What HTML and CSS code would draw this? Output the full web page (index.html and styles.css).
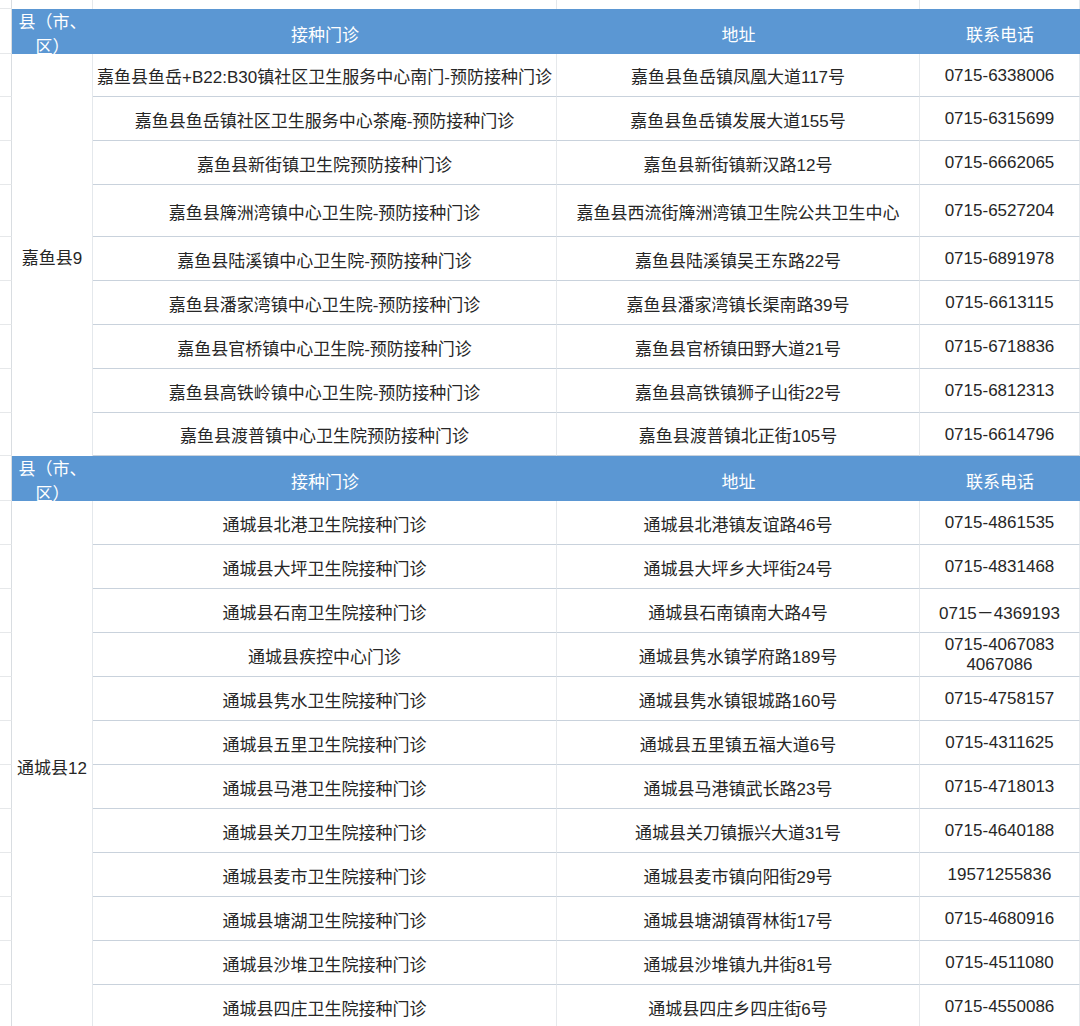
FILE: index.html
```html
<!DOCTYPE html>
<html lang="zh-CN">
<head>
<meta charset="utf-8">
<title>接种门诊</title>
<link rel="stylesheet" href="styles.css">
</head>
<body>
<div class="sheet">
  <div class="strip">
    <div class="mg"></div><div class="sc"></div><div class="sc"></div><div class="sc"></div><div class="sc"></div>
  </div>

  <section class="block s1">
    <div class="mg"></div>
    <div class="th th-county">县（市、区）</div>
    <div class="th">接种门诊</div>
    <div class="th">地址</div>
    <div class="th">联系电话</div>

    <div class="mg"></div>
    <div class="county c9">嘉鱼县9</div>
    <div class="td">嘉鱼县鱼岳+B22:B30镇社区卫生服务中心南门-预防接种门诊</div>
    <div class="td">嘉鱼县鱼岳镇凤凰大道117号</div>
    <div class="td">0715-6338006</div>

    <div class="mg"></div>
    <div class="td">嘉鱼县鱼岳镇社区卫生服务中心茶庵-预防接种门诊</div>
    <div class="td">嘉鱼县鱼岳镇发展大道155号</div>
    <div class="td">0715-6315699</div>

    <div class="mg"></div>
    <div class="td">嘉鱼县新街镇卫生院预防接种门诊</div>
    <div class="td">嘉鱼县新街镇新汉路12号</div>
    <div class="td">0715-6662065</div>

    <div class="mg"></div>
    <div class="td">嘉鱼县簰洲湾镇中心卫生院-预防接种门诊</div>
    <div class="td">嘉鱼县西流街簰洲湾镇卫生院公共卫生中心</div>
    <div class="td">0715-6527204</div>

    <div class="mg"></div>
    <div class="td">嘉鱼县陆溪镇中心卫生院-预防接种门诊</div>
    <div class="td">嘉鱼县陆溪镇吴王东路22号</div>
    <div class="td">0715-6891978</div>

    <div class="mg"></div>
    <div class="td">嘉鱼县潘家湾镇中心卫生院-预防接种门诊</div>
    <div class="td">嘉鱼县潘家湾镇长渠南路39号</div>
    <div class="td">0715-6613115</div>

    <div class="mg"></div>
    <div class="td">嘉鱼县官桥镇中心卫生院-预防接种门诊</div>
    <div class="td">嘉鱼县官桥镇田野大道21号</div>
    <div class="td">0715-6718836</div>

    <div class="mg"></div>
    <div class="td">嘉鱼县高铁岭镇中心卫生院-预防接种门诊</div>
    <div class="td">嘉鱼县高铁镇狮子山街22号</div>
    <div class="td">0715-6812313</div>

    <div class="mg"></div>
    <div class="td">嘉鱼县渡普镇中心卫生院预防接种门诊</div>
    <div class="td">嘉鱼县渡普镇北正街105号</div>
    <div class="td">0715-6614796</div>
  </section>

  <section class="block s2">
    <div class="mg"></div>
    <div class="th th-county">县（市、区）</div>
    <div class="th">接种门诊</div>
    <div class="th">地址</div>
    <div class="th">联系电话</div>

    <div class="mg"></div>
    <div class="county c12">通城县12</div>
    <div class="td">通城县北港卫生院接种门诊</div>
    <div class="td">通城县北港镇友谊路46号</div>
    <div class="td">0715-4861535</div>

    <div class="mg"></div>
    <div class="td">通城县大坪卫生院接种门诊</div>
    <div class="td">通城县大坪乡大坪街24号</div>
    <div class="td">0715-4831468</div>

    <div class="mg"></div>
    <div class="td">通城县石南卫生院接种门诊</div>
    <div class="td">通城县石南镇南大路4号</div>
    <div class="td">0715－4369193</div>

    <div class="mg"></div>
    <div class="td">通城县疾控中心门诊</div>
    <div class="td">通城县隽水镇学府路189号</div>
    <div class="td two">0715-4067083<br>4067086</div>

    <div class="mg"></div>
    <div class="td">通城县隽水卫生院接种门诊</div>
    <div class="td">通城县隽水镇银城路160号</div>
    <div class="td">0715-4758157</div>

    <div class="mg"></div>
    <div class="td">通城县五里卫生院接种门诊</div>
    <div class="td">通城县五里镇五福大道6号</div>
    <div class="td">0715-4311625</div>

    <div class="mg"></div>
    <div class="td">通城县马港卫生院接种门诊</div>
    <div class="td">通城县马港镇武长路23号</div>
    <div class="td">0715-4718013</div>

    <div class="mg"></div>
    <div class="td">通城县关刀卫生院接种门诊</div>
    <div class="td">通城县关刀镇振兴大道31号</div>
    <div class="td">0715-4640188</div>

    <div class="mg"></div>
    <div class="td">通城县麦市卫生院接种门诊</div>
    <div class="td">通城县麦市镇向阳街29号</div>
    <div class="td">19571255836</div>

    <div class="mg"></div>
    <div class="td">通城县塘湖卫生院接种门诊</div>
    <div class="td">通城县塘湖镇胥林街17号</div>
    <div class="td">0715-4680916</div>

    <div class="mg"></div>
    <div class="td">通城县沙堆卫生院接种门诊</div>
    <div class="td">通城县沙堆镇九井街81号</div>
    <div class="td">0715-4511080</div>

    <div class="mg"></div>
    <div class="td">通城县四庄卫生院接种门诊</div>
    <div class="td">通城县四庄乡四庄街6号</div>
    <div class="td">0715-4550086</div>
  </section>
</div>
</body>
</html>
```

FILE: styles.css
```css
html, body {
  margin: 0;
  padding: 0;
  background: #ffffff;
}
body {
  width: 1080px;
  height: 1026px;
  overflow: hidden;
  font-family: "Liberation Sans", "Noto Sans CJK SC", sans-serif;
  font-size: 17px;
  color: #262626;
}
.sheet {
  width: 1080px;
}
.strip,
.block {
  display: grid;
  grid-template-columns: 12px 81px 464px 363px 160px;
}
.strip {
  height: 9px;
}
.strip .mg {
  border-right: 1px solid #d9dde1;
}
.strip .sc {
  border-right: 1px solid #e4e8ec;
}
.s1 {
  grid-template-rows: 45px 43px 44px 44px 52px 44px 44px 44px 44px 43px;
}
.s2 {
  grid-template-rows: 45px repeat(12, 44px);
}
.mg {
  box-sizing: border-box;
  border-bottom: 1px solid #e6e8ea;
  border-right: 1px solid #d9dde1;
  background: #ffffff;
}
.th {
  background: #5b97d3;
  color: #ffffff;
  display: flex;
  align-items: center;
  justify-content: center;
  padding-top: 3px;
  box-sizing: border-box;
  white-space: nowrap;
}
.th-county {
  display: block;
  white-space: normal;
  text-align: center;
  line-height: 25px;
  padding-top: 1px;
  overflow: hidden;
}
.county {
  display: flex;
  align-items: center;
  justify-content: center;
  border-right: 1px solid #e4e8ec;
  white-space: nowrap;
  padding-top: 2px;
  box-sizing: border-box;
}
.c9 {
  grid-row: span 9;
}
.c12 {
  grid-row: span 12;
}
.td {
  box-sizing: border-box;
  display: flex;
  align-items: center;
  justify-content: center;
  text-align: center;
  white-space: nowrap;
  border-bottom: 1px solid #c9d2dc;
  border-right: 1px solid #e6e9ec;
  padding-top: 1px;
}
.two {
  line-height: 20px;
}
```
